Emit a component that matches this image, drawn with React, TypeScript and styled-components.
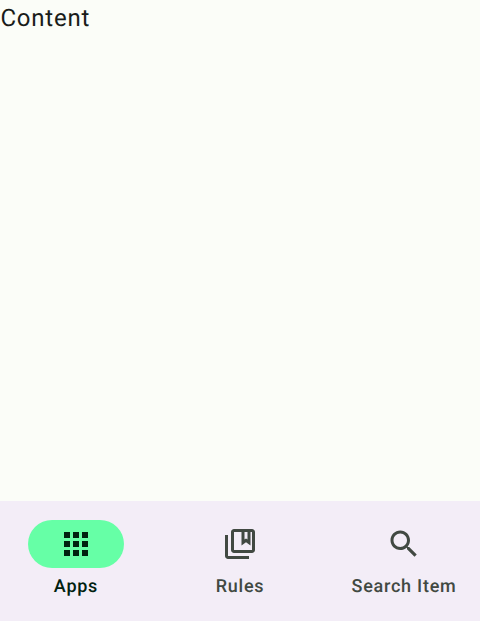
import React from "react";
import styled, { createGlobalStyle } from "styled-components";

const GlobalStyle = createGlobalStyle`
  * { box-sizing: border-box; }
  body {
    margin: 0;
    font-family: Roboto, "Noto Sans", sans-serif;
    text-rendering: geometricPrecision;
  }
`;

const Screen = styled.div`
  display: flex;
  flex-direction: column;
  height: 100vh;
  background: #fbfdf8;
`;

const Content = styled.main`
  flex: 1;
  padding-left: 0.5px;
  font-size: 24px;
  font-weight: 400;
  line-height: 36px;
  letter-spacing: 0.75px;
  color: #191c1a;
`;

const NavBar = styled.nav`
  display: grid;
  grid-template-columns: 152px 152px 152px;
  column-gap: 12px;
  height: 120px;
  padding-top: 19px;
  background: #f3edf7;
`;

const NavItem = styled.a<{ $active?: boolean }>`
  display: flex;
  flex-direction: column;
  align-items: center;
  color: ${(p) => (p.$active ? "#002110" : "#414942")};
`;

const Indicator = styled.span<{ $active?: boolean }>`
  display: flex;
  align-items: center;
  justify-content: center;
  width: 96px;
  height: 48px;
  border-radius: 24px;
  background: ${(p) => (p.$active ? "#66ffa6" : "transparent")};
`;

const Icon = styled.svg`
  width: 36px;
  height: 36px;
  fill: currentColor;
`;

const Label = styled.span`
  margin-top: 7px;
  font-size: 18px;
  font-weight: 500;
  line-height: 24px;
  letter-spacing: 0.75px;
  white-space: nowrap;
`;

const items = [
  {
    label: "Apps",
    active: true,
    path: "M4 8h4V4H4v4zm6 12h4v-4h-4v4zm-6 0h4v-4H4v4zm0-6h4v-4H4v4zm6 0h4v-4h-4v4zm6-10v4h4V4h-4zm-6 4h4V4h-4v4zm6 6h4v-4h-4v4zm0 6h4v-4h-4v4z",
  },
  {
    label: "Rules",
    path: "M4 6H2v14c0 1.1.9 2 2 2h14v-2H4V6zM20 2H8c-1.1 0-2 .9-2 2v12c0 1.1.9 2 2 2h12c1.1 0 2-.9 2-2V4c0-1.1-.9-2-2-2zm-5 2h2v5l-1-.75L15 9V4zm5 12H8V4h5v9l3-2.25L19 13V4h1v12z",
  },
  {
    label: "Search Item",
    path: "M15.5 14h-.79l-.28-.27C15.41 12.59 16 11.11 16 9.5 16 5.91 13.09 3 9.5 3S3 5.91 3 9.5 5.91 16 9.5 16c1.61 0 3.09-.59 4.23-1.57l.27.28v.79l5 4.99L20.49 19l-4.99-5zm-6 0C7.01 14 5 11.99 5 9.5S7.01 5 9.5 5 14 7.01 14 9.5 11.99 14 9.5 14z",
  },
];

export default function App() {
  return (
    <>
      <GlobalStyle />
      <Screen>
        <Content>Content</Content>
        <NavBar>
          {items.map((item) => (
            <NavItem key={item.label} $active={item.active}>
              <Indicator $active={item.active}>
                <Icon viewBox="0 0 24 24">
                  <path d={item.path} />
                </Icon>
              </Indicator>
              <Label>{item.label}</Label>
            </NavItem>
          ))}
        </NavBar>
      </Screen>
    </>
  );
}
